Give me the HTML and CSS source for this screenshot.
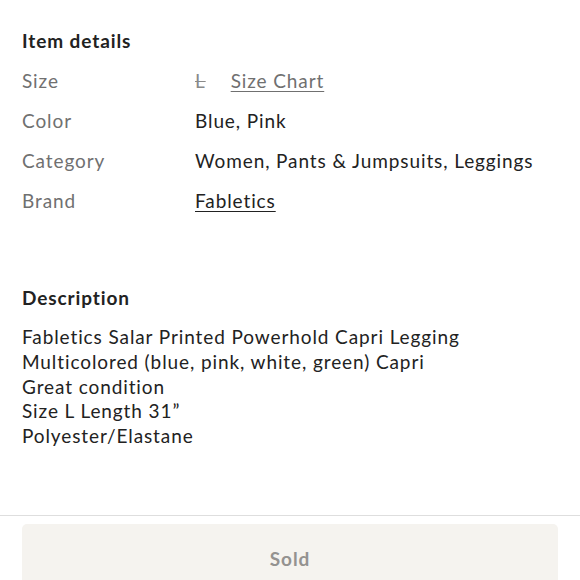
FILE: index.html
```html
<!DOCTYPE html>
<html lang="en">
<head>
<meta charset="utf-8">
<link rel="stylesheet" href="styles.css">
</head>
<body>
<main class="page">
  <section class="details">
    <h2 class="heading">Item details</h2>
    <dl class="rows">
      <div class="row"><dt>Size</dt><dd><span class="size-val">L</span><a class="link muted">Size Chart</a></dd></div>
      <div class="row"><dt>Color</dt><dd>Blue, Pink</dd></div>
      <div class="row"><dt>Category</dt><dd>Women, Pants &amp; Jumpsuits, Leggings</dd></div>
      <div class="row"><dt>Brand</dt><dd><a class="link">Fabletics</a></dd></div>
    </dl>
  </section>
  <section class="description">
    <h2 class="heading">Description</h2>
    <p class="desc-text">Fabletics Salar Printed Powerhold Capri Legging<br>Multicolored (blue, pink, white, green) Capri<br>Great condition<br>Size L Length 31”<br>Polyester/Elastane</p>
  </section>
</main>
<footer class="footer">
  <div class="sold" role="button">Sold</div>
</footer>
</body>
</html>
```
FILE: styles.css
```css
html, body {
  margin: 0;
  padding: 0;
  background: #fff;
  width: 580px;
  height: 580px;
  overflow: hidden;
}
body {
  font-family: Lato, "Noto Sans", sans-serif;
  color: #222;
  letter-spacing: 0.9px;
  display: flex;
  flex-direction: column;
}
.page {
  padding: 28px 22px 0;
  height: 515px;
  flex: none;
  box-sizing: border-box;
}
.heading {
  margin: 0;
  font-size: 19px;
  line-height: 26px;
  font-weight: 700;
  color: #222;
}
.rows {
  margin: 6px 0 0;
}
.row {
  display: flex;
  height: 40px;
  align-items: center;
  font-size: 19px;
}
.row dt {
  width: 173px;
  color: #707070;
}
.row dd {
  margin: 0;
  color: #222;
  display: flex;
  gap: 25px;
}
.size-val {
  color: #8a8a8a;
  text-decoration: line-through;
}
.link {
  text-decoration: underline;
  text-underline-offset: 3px;
  color: #222;
}
.link.muted {
  color: #707070;
}
.description {
  margin-top: 65px;
}
.desc-text {
  margin: 14px 0 0;
  font-size: 19px;
  line-height: 24.75px;
  color: #222;
}
.footer {
  border-top: 1px solid #dedede;
  padding: 8px 22px 0;
  flex: 1;
}
.sold {
  box-sizing: border-box;
  height: 80px;
  border-radius: 5px;
  background: #f5f3ef;
  font-size: 19px;
  line-height: 26px;
  font-weight: 700;
  color: #949290;
  text-align: center;
  padding-top: 22px;
}
```
